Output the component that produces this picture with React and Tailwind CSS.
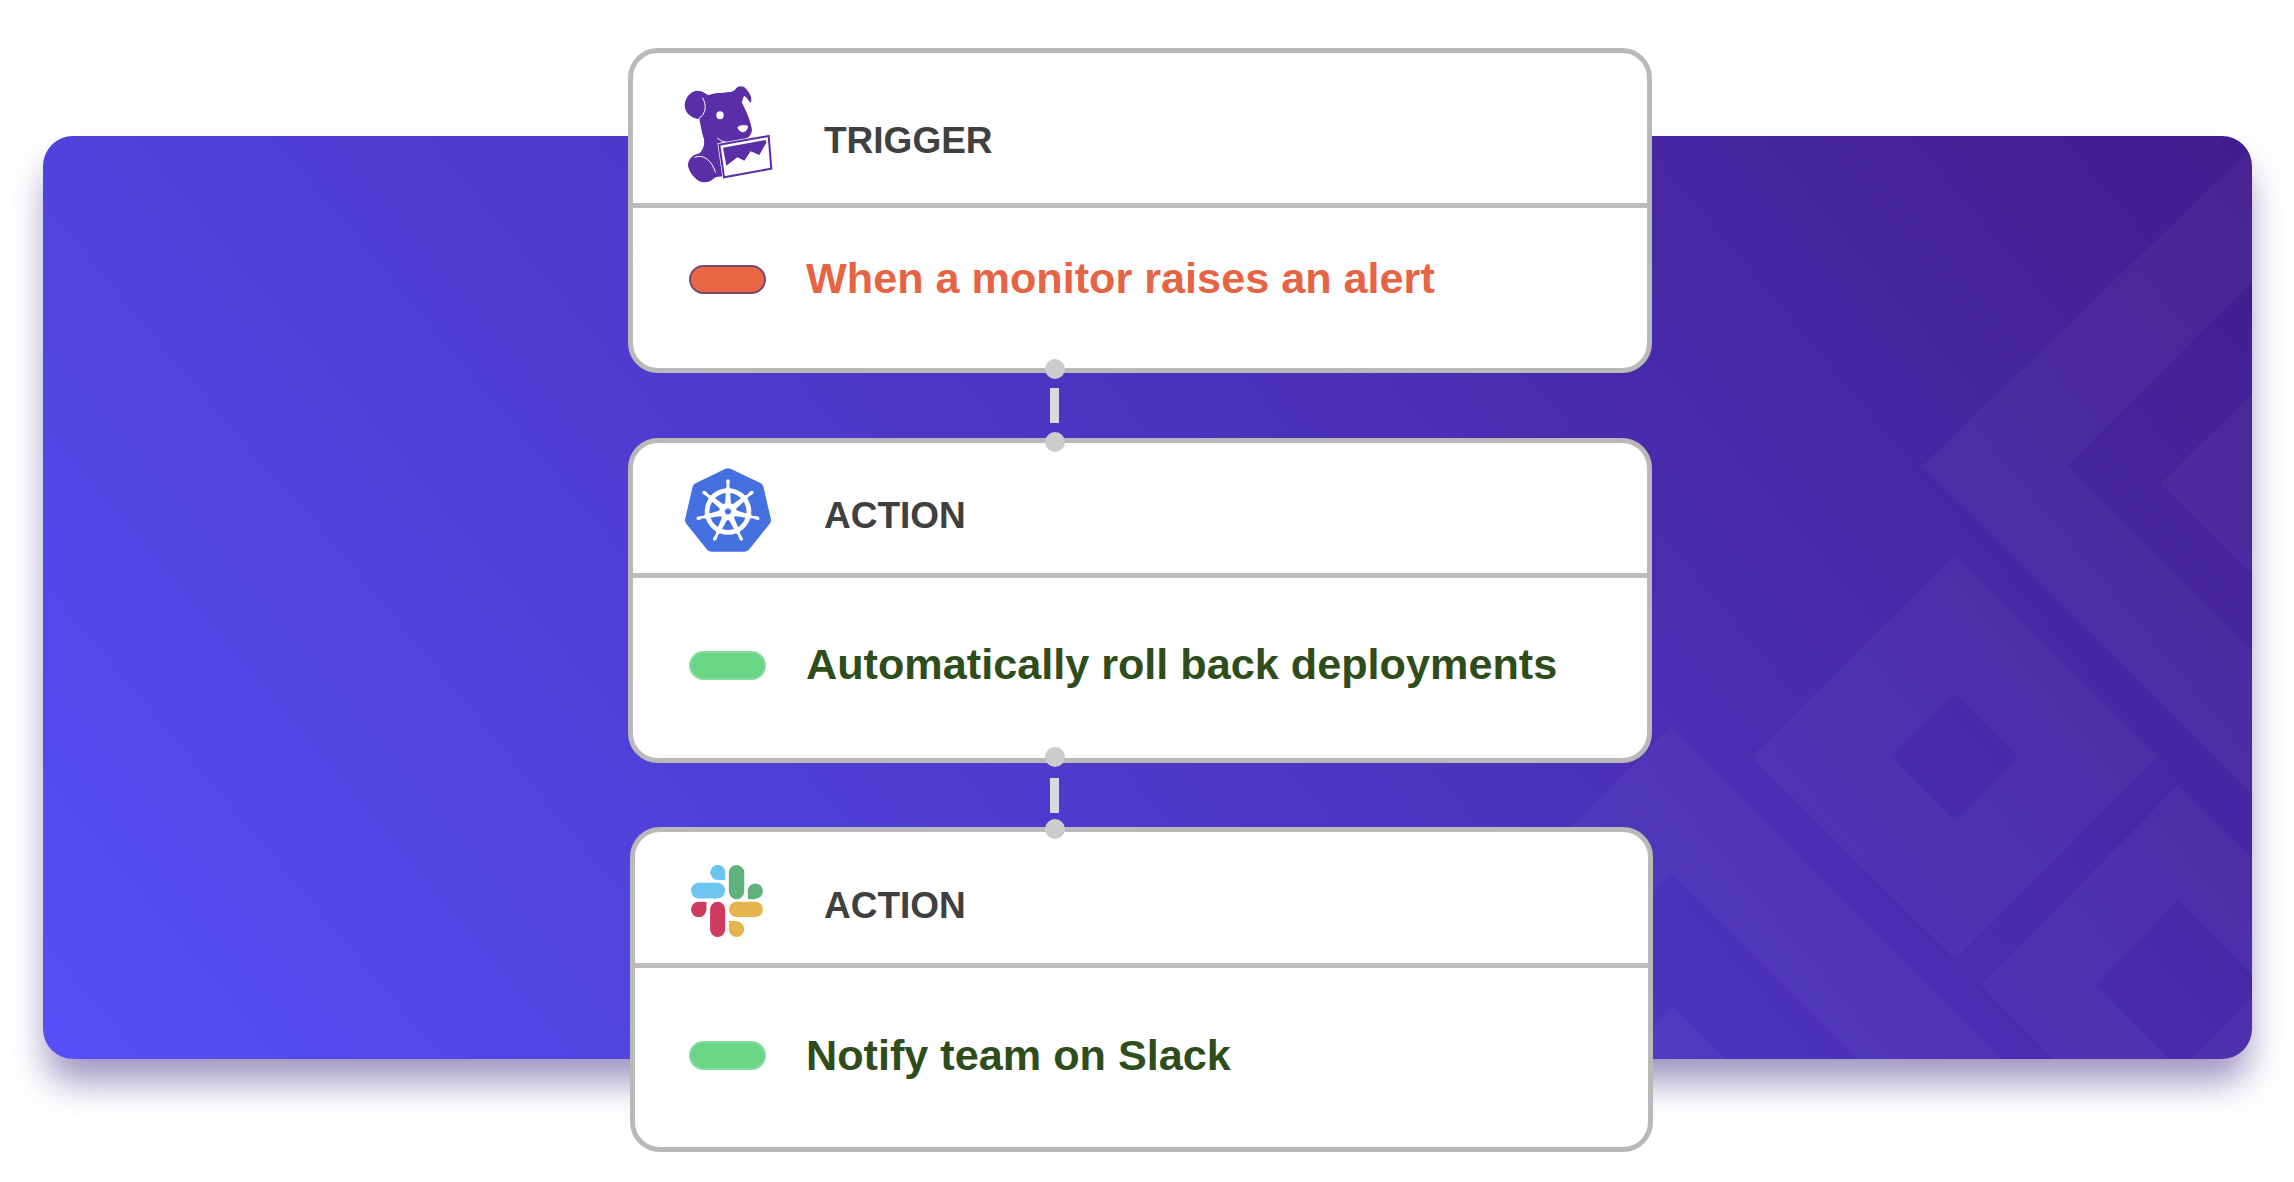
import React from "react";
import { SiKubernetes } from "react-icons/si";

function DogLogo() {
  return (
    <svg viewBox="0 0 390 390" className="w-[130px] h-[130px]">
      <path
        fill="#5a2ea6"
        d="M110 62C92 64 74 84 74 106C74 126 90 142 110 146C114 147 116 147 118 146C122 168 126 190 132 208C134 224 130 240 118 250C98 254 84 268 84 286C86 304 100 322 118 334C134 340 150 336 160 326C168 320 176 318 190 320L178 222L186 216C210 226 238 224 254 208C270 202 280 186 274 170C270 148 258 122 246 98C248 88 250 80 254 78C262 84 264 92 272 98C278 90 272 70 258 56C248 46 234 46 226 58C220 68 206 66 190 68C172 68 158 70 144 76C134 68 124 62 110 62Z"
      />
      <path fill="none" stroke="#ffffff" strokeWidth="3" strokeLinecap="round" d="M128 84C140 106 140 130 116 146" />
      <path fill="none" stroke="#ffffff" strokeWidth="3" strokeLinecap="round" d="M104 262C128 252 154 268 166 306" />
      <path fill="none" stroke="#ffffff" strokeWidth="3" strokeLinecap="round" d="M172 204C190 222 224 222 246 208" />
      <ellipse cx="180" cy="136" rx="11" ry="12" fill="#ffffff" />
      <path fill="#ffffff" d="M232 172C240 165 254 163 264 168C264 179 256 187 247 187C240 185 234 180 232 172Z" />
      <path fill="#ffffff" stroke="#ffffff" strokeWidth="10" d="M178 224L326 198L334 296L192 322Z" />
      <path fill="#ffffff" stroke="#5a2ea6" strokeWidth="6" d="M178 224L326 198L334 296L192 322Z" />
      <path fill="#5a2ea6" d="M189 233L317 210L319 218L298 255L272 244L253 272L232 262L199 287Z" />
    </svg>
  );
}

function SlackLogo() {
  return (
    <svg viewBox="35 45 215 215" className="w-[72px] h-[72px]">
      <g fill="#6cc5ee">
        <rect x="35" y="98" width="102" height="47" rx="23.5" />
        <circle cx="115" cy="67" r="22.5" />
        <rect x="115" y="67" width="22" height="23" />
      </g>
      <g fill="#5fb27e">
        <rect x="148" y="45" width="46" height="102" rx="23" />
        <circle cx="227" cy="123" r="23" />
        <rect x="205" y="123" width="22" height="24" />
      </g>
      <g fill="#cf3a60">
        <rect x="92" y="155" width="45" height="105" rx="22.5" />
        <circle cx="58" cy="178" r="23" />
        <rect x="58" y="155" width="23" height="23" />
      </g>
      <g fill="#e5b44c">
        <rect x="148" y="155" width="102" height="45" rx="22.5" />
        <circle cx="171" cy="237" r="23" />
        <rect x="148" y="212" width="23" height="25" />
      </g>
    </svg>
  );
}

function Pattern() {
  return (
    <svg
      viewBox="43 136 2209 923"
      className="absolute inset-0 w-full h-full"
      fill="#ffffff"
      fillOpacity="0.035"
    >
      <path d="M1922 466L2254 146V279L2067 466L2254 653V796Z" />
      <path d="M2160 484L2254 391V576Z" />
      <path fillRule="evenodd" d="M1751 757L1955 555L2158 757L1955 959ZM1891 757L1955 821L2018 757L1955 694Z" />
      <path fillRule="evenodd" d="M1981 985L2178 785L2254 860V1059H2053ZM2096 985L2169 1059H2254V978L2178 900Z" />
      <path d="M2191 1059L2254 995V1059Z" />
      <path d="M1671 727L2002 1059H1858L1671 873L1500 1059H1340Z" />
      <path d="M1673 1007L1726 1059H1620Z" />
    </svg>
  );
}

function Card({ logo, label, text, textColor, pillClass, headerClass, labelClass, bodyClass, slotClass, bodyPad, extraClass }) {
  return (
    <div className={`bg-white border-[5px] border-[#b9b9b9] rounded-[30px] h-[325px] flex flex-col ${extraClass}`}>
      <div className={`flex items-center border-b-[5px] border-[#bcbcbc] ${headerClass}`}>
        <div className={`flex items-center justify-center shrink-0 ${slotClass}`}>{logo}</div>
        <span className={`text-[37px] font-bold leading-none text-[#404040] ${labelClass}`}>{label}</span>
      </div>
      <div className={`flex items-center gap-[40px] ${bodyClass} ${bodyPad}`}>
        <div className={`w-[77px] h-[29px] rounded-full border-2 ${pillClass}`}></div>
        <span className={`text-[43.200px] font-bold leading-none whitespace-nowrap ${textColor}`}>{text}</span>
      </div>
    </div>
  );
}

function Connector({ height, topDot, bottomDot }) {
  return (
    <div className={`relative flex justify-center items-center w-[1px] left-[426px] ${height}`}>
      <div className={`absolute w-[20px] h-[20px] rounded-full bg-[#cccccc] ${topDot}`}></div>
      <div className="shrink-0 w-[9px] h-[35px] bg-[#dadade]"></div>
      <div className={`absolute w-[20px] h-[20px] rounded-full bg-[#cccccc] ${bottomDot}`}></div>
    </div>
  );
}

export default function App() {
  return (
    <div className="grid w-full h-[1182px] overflow-hidden bg-white font-['Liberation_Sans',Arial,sans-serif]">
      <div className="relative col-start-1 row-start-1 ml-[43px] mr-[42px] mt-[136px] h-[923px] rounded-[30px] overflow-hidden bg-linear-50 from-[#554ff5] via-[#4c36c4] to-[#411d8e] shadow-[0_26px_36px_-4px_rgba(60,40,130,0.5)]">
        <Pattern />
      </div>
      <div className="relative col-start-1 row-start-1 ml-[628px] w-[1024px] pt-[48px]">
        <Card
          logo={<DogLogo />}
          label="TRIGGER"
          labelClass="mt-[26px] -ml-[1px]"
          text="When a monitor raises an alert"
          textColor="text-[#e66443]"
          pillClass="bg-[#e96645] border-[#7a4a6e]"
          headerClass="h-[155px] pb-[2px]"
          bodyClass="h-[160px]"
          bodyPad="pl-[56px] pb-[18px]"
          slotClass="w-[192px] pr-[8px] pt-[16px]"
          extraClass=""
        />
        <Connector height="h-[65px]" topDot="-top-[14px]" bottomDot="-bottom-[14px]" />
        <Card
          logo={<SiKubernetes className="w-[86px] h-[86px] text-[#4470e0]" />}
          label="ACTION"
          labelClass="mt-[12px] -ml-[1px]"
          text="Automatically roll back deployments"
          textColor="text-[#2f4c1b]"
          pillClass="bg-[#6ad585] border-[#85dd9c]"
          headerClass="h-[135px] pt-[2px]"
          bodyClass="h-[180px]"
          bodyPad="pl-[56px] pb-[6px]"
          slotClass="w-[192px] pr-[2px] pt-[2px]"
          extraClass=""
        />
        <Connector height="h-[64px]" topDot="-top-[16px]" bottomDot="-bottom-[12px]" />
        <Card
          logo={<SlackLogo />}
          label="ACTION"
          labelClass="mt-[14px] -ml-[1px]"
          text="Notify team on Slack"
          textColor="text-[#2f4c1b]"
          pillClass="bg-[#6ad585] border-[#85dd9c]"
          headerClass="h-[136px] pt-[2px]"
          bodyClass="h-[179px]"
          bodyPad="pl-[54px] pb-[4px]"
          slotClass="w-[190px] pr-[6px] pt-[4px]"
          extraClass="ml-[2px] -mr-[1px]"
        />
      </div>
    </div>
  );
}
